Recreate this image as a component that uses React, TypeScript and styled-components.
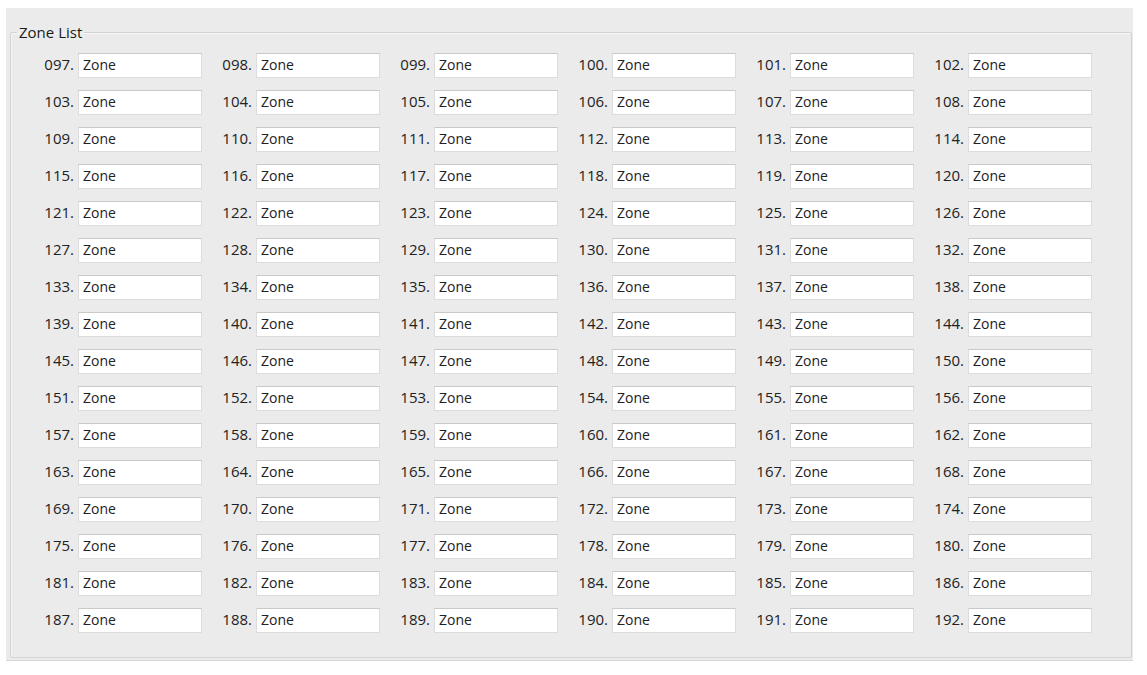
import styled, { createGlobalStyle } from "styled-components";

const GlobalStyle = createGlobalStyle`
  html, body {
    margin: 0;
    padding: 0;
    background: #ffffff;
    font-family: "Open Sans", "Noto Sans", "Liberation Sans", sans-serif;
  }
`;

const Page = styled.div`
  padding: 8px 0 0 6px;
  width: 1127px;
`;

const Panel = styled.div`
  background: #ebebeb;
  padding: 15px 1px 2px 4px;
  border-bottom: 1px solid #d6d6d6;
  box-shadow: 0 3px 0 -1px #f2f2f2;
`;

const Frame = styled.fieldset`
  margin: 0;
  padding: 12px 0 24px 0;
  border: 1px solid #d2d2d2;
  box-shadow: inset 1px 1px 0 #f7f7f7;
  border-radius: 2px;
  min-width: 0;
`;

const Title = styled.legend`
  margin-left: 6px;
  padding: 0 2px;
  font-size: 15px;
  line-height: 18px;
  color: #1a1a1a;
`;

const Grid = styled.div`
  display: grid;
  grid-template-columns: repeat(6, 178px);
  grid-auto-rows: 25px;
  row-gap: 12px;
  padding-left: 13px;
`;

const Cell = styled.div`
  display: flex;
  align-items: center;
  justify-content: flex-end;
`;

const Num = styled.span`
  font-size: 15px;
  line-height: 20px;
  color: #222;
  margin-right: 4px;
  margin-bottom: 3px;
  letter-spacing: 0;
`;

const NameBox = styled.input`
  box-sizing: border-box;
  width: 124px;
  height: 25px;
  margin: 0;
  padding: 0 4px 3px;
  border: 1px solid #dcdcdc;
  border-top-color: #c9c9c9;
  background: #ffffff;
  font-family: inherit;
  font-size: 14px;
  color: #222;
  outline: none;
`;

const zones = Array.from({ length: 96 }, (_, i) => String(97 + i).padStart(3, "0"));

export default function App() {
  return (
    <Page>
      <GlobalStyle />
      <Panel>
        <Frame>
          <Title>Zone List</Title>
          <Grid>
            {zones.map((n) => (
              <Cell key={n}>
                <Num>{n}.</Num>
                <NameBox defaultValue="Zone" />
              </Cell>
            ))}
          </Grid>
        </Frame>
      </Panel>
    </Page>
  );
}
